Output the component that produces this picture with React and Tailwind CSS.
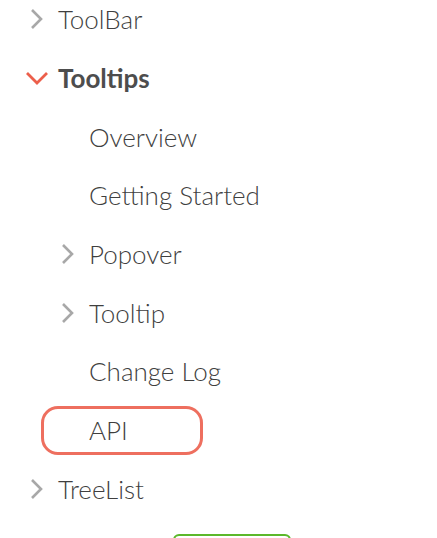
const ChevronRight = () => (
  <svg width="15" height="22" viewBox="0 0 15 22" fill="none" stroke="#a8a8a8" strokeWidth="2.6">
    <path d="M3 2l9 9-9 9" />
  </svg>
);

const ChevronDown = () => (
  <svg width="24" height="14" viewBox="0 0 24 14" fill="none" stroke="#ec5f4b" strokeWidth="2.8">
    <path d="M2 2l10 10 10-10" />
  </svg>
);

function Row({ children, icon, iconClass = "", textClass = "font-light" }) {
  return (
    <div className="flex h-[58.7px] items-center">
      <div className={`flex shrink-0 items-center ${iconClass}`}>{icon}</div>
      <span className={textClass}>{children}</span>
    </div>
  );
}

export default function App() {
  return (
    <div
      className="relative h-[538px] w-[437px] overflow-hidden bg-white text-[26px] leading-none text-[#3f3f3f]"
      style={{ fontFamily: "Lato, 'Noto Sans', sans-serif" }}
    >
      <div className="-mt-[10px]">
        <Row icon={<ChevronRight />} iconClass="ml-[29px] w-[29px]">ToolBar</Row>
        <Row icon={<ChevronDown />} iconClass="ml-[25px] w-[33px]" textClass="font-bold text-[#4d4d4d]">
          Tooltips
        </Row>
        <Row iconClass="ml-[89px]">Overview</Row>
        <Row iconClass="ml-[89px]">Getting Started</Row>
        <Row icon={<ChevronRight />} iconClass="ml-[60px] w-[29px]">Popover</Row>
        <Row icon={<ChevronRight />} iconClass="ml-[60px] w-[29px]">Tooltip</Row>
        <Row iconClass="ml-[89px]">Change Log</Row>
        <div className="flex h-[58.7px] items-center">
          <div className="ml-[41px] flex h-[49px] w-[162px] items-center rounded-[17px] border-[3px] border-[#ee6f5f] pl-[45px] font-light">
            API
          </div>
        </div>
        <Row icon={<ChevronRight />} iconClass="ml-[29px] w-[29px]">TreeList</Row>
      </div>
      <div className="absolute left-[173px] top-[534px] h-[20px] w-[118px] rounded-[6px] border-2 border-[#5cb82a]" />
    </div>
  );
}
